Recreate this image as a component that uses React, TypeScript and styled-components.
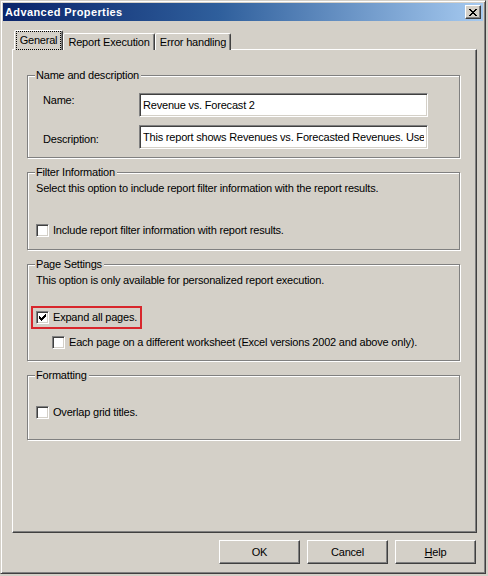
import React from 'react';
import styled, { createGlobalStyle, css } from 'styled-components';

const face = '#d4d0c8';
const shadow = '#808080';
const darkShadow = '#404040';
const highlight = '#ffffff';

const GlobalStyle = createGlobalStyle`
  * { box-sizing: border-box; }
  html, body {
    margin: 0;
    padding: 0;
    background: ${face};
  }
  body {
    font-family: "Liberation Sans", Arial, sans-serif;
    font-size: 11px;
    letter-spacing: -0.2px;
    color: #000;
  }
`;

const raised = css`
  border: 1px solid;
  border-color: ${highlight} ${darkShadow} ${darkShadow} ${highlight};
  box-shadow: inset -1px -1px 0 ${shadow};
`;

const sunken = css`
  border: 1px solid;
  border-color: ${shadow} ${highlight} ${highlight} ${shadow};
  box-shadow: inset 1px 1px 0 ${darkShadow}, inset -1px -1px 0 ${face};
`;

const Window = styled.div`
  width: 486px;
  height: 574px;
  display: flex;
  flex-direction: column;
  padding: 2px;
  background: ${face};
  border: 1px solid;
  border-color: ${face} ${darkShadow} ${darkShadow} ${face};
  box-shadow: inset 1px 1px 0 ${highlight}, inset -1px -1px 0 ${shadow};
`;

const TitleBar = styled.div`
  height: 18px;
  display: flex;
  align-items: center;
  justify-content: space-between;
  padding: 0 2px 0 2px;
  background: linear-gradient(to right, #0a246a 0%, #2f5f9c 45%, #a6caf0 100%);
`;

const Title = styled.span`
  color: #fff;
  font-weight: bold;
  font-size: 11px;
  letter-spacing: 0.4px;
`;

const CloseButton = styled.div`
  width: 16px;
  height: 14px;
  background: ${face};
  display: flex;
  align-items: center;
  justify-content: center;
  ${raised};
`;

const Body = styled.div`
  display: flex;
  flex-direction: column;
  padding: 10px 0 0 9px;
`;

const TabStrip = styled.div`
  display: flex;
  align-items: flex-end;
  height: 19px;
  margin-left: 2px;
  position: relative;
  z-index: 1;
  margin-bottom: -1px;
`;

const Tab = styled.div<{ $active?: boolean; $width: number }>`
  width: ${({ $width }) => $width}px;
  height: ${({ $active }) => ($active ? 20 : 17)}px;
  background: ${face};
  border: 1px solid;
  border-bottom: none;
  border-color: ${highlight} ${darkShadow} transparent ${highlight};
  border-radius: 2px 2px 0 0;
  box-shadow: inset -1px 0 0 ${shadow};
  display: flex;
  align-items: ${({ $active }) => ($active ? 'flex-start' : 'center')};
  justify-content: center;
  padding-top: ${({ $active }) => ($active ? 1 : 0)}px;
  white-space: nowrap;
`;

const FocusLabel = styled.span`
  outline: 1px dotted #000;
  padding: 2px 3px 2px 3px;
  line-height: 13px;
`;

const Panel = styled.div`
  width: 465px;
  height: 484px;
  display: flex;
  flex-direction: column;
  gap: 14px;
  padding: 25px 0 0 14px;
  ${raised};
`;

const GroupBox = styled.div<{ $height: number }>`
  position: relative;
  width: 433px;
  height: ${({ $height }) => $height}px;
  border: 1px solid ${shadow};
  box-shadow: inset 1px 1px 0 ${highlight}, 1px 1px 0 ${highlight};
  padding: 9px 0 0 8px;
`;

const GroupLegend = styled.span`
  position: absolute;
  top: -7px;
  left: 7px;
  padding: 0 2px 0 1px;
  line-height: 13px;
  background: ${face};
`;

const FieldGrid = styled.div`
  display: grid;
  grid-template-columns: 96px 289px;
  grid-auto-rows: 24px;
  row-gap: 8px;
  padding: 8px 0 0 7px;
`;

const FieldLabel = styled.label<{ $offset: number }>`
  padding-top: ${({ $offset }) => $offset}px;
  line-height: 13px;
`;

const TextBox = styled.input`
  width: 289px;
  height: 24px;
  padding: 0 3px 1px;
  margin: 0;
  background: #fff;
  font: inherit;
  letter-spacing: inherit;
  color: #000;
  outline: none;
  ${sunken};
`;

const Hint = styled.div`
  line-height: 13px;
`;

const CheckRow = styled.label<{ $marked?: boolean; $indent?: number; $gap: number }>`
  display: inline-flex;
  align-self: flex-start;
  align-items: center;
  gap: 4px;
  height: 13px;
  line-height: 13px;
  margin-top: ${({ $gap }) => $gap}px;
  margin-left: ${({ $indent }) => $indent ?? 0}px;
  ${({ $marked }) =>
    $marked &&
    css`
      outline: 2px solid #d8262c;
      outline-offset: 3px;
    `}
`;

const CheckBox = styled.span`
  width: 13px;
  height: 13px;
  flex: none;
  display: flex;
  align-items: center;
  justify-content: center;
  background: #fff;
  ${sunken};
`;

const GroupBody = styled.div`
  display: flex;
  flex-direction: column;
`;

const ButtonRow = styled.div`
  width: 465px;
  display: flex;
  justify-content: flex-end;
  gap: 7px;
  padding-right: 1px;
  margin-top: 7px;
`;

const DialogButton = styled.button`
  width: 81px;
  height: 24px;
  padding: 0;
  background: ${face};
  font: inherit;
  letter-spacing: inherit;
  color: #000;
  ${raised};
`;

const CheckMark = () => (
  <svg width="7" height="7" viewBox="0 0 7 7" shapeRendering="crispEdges">
    <path
      d="M0 2h1v3H0z M1 3h1v3H1z M2 4h1v3H2z M3 3h1v3H3z M4 2h1v3H4z M5 1h1v3H5z M6 0h1v3H6z"
      fill="#000"
    />
  </svg>
);

const CloseGlyph = () => (
  <svg width="8" height="7" viewBox="0 0 8 7" shapeRendering="crispEdges">
    <path
      d="M0 0h2v1H0z M6 0h2v1H6z M1 1h2v1H1z M5 1h2v1H5z M2 2h4v1H2z M3 3h2v1H3z M2 4h4v1H2z M1 5h2v1H1z M5 5h2v1H5z M0 6h2v1H0z M6 6h2v1H6z"
      fill="#000"
    />
  </svg>
);

const Check = ({
  label,
  checked,
  marked,
  indent,
  gap,
}: {
  label: string;
  checked?: boolean;
  marked?: boolean;
  indent?: number;
  gap: number;
}) => (
  <CheckRow $marked={marked} $indent={indent} $gap={gap}>
    <CheckBox>{checked && <CheckMark />}</CheckBox>
    <span>{label}</span>
  </CheckRow>
);

export default function App() {
  return (
    <>
      <GlobalStyle />
      <Window>
        <TitleBar>
          <Title>Advanced Properties</Title>
          <CloseButton>
            <CloseGlyph />
          </CloseButton>
        </TitleBar>
        <Body>
          <TabStrip>
            <Tab $active $width={49}>
              <FocusLabel>General</FocusLabel>
            </Tab>
            <Tab $width={92}>Report Execution</Tab>
            <Tab $width={76}>Error handling</Tab>
          </TabStrip>
          <Panel>
            <GroupBox $height={83}>
              <GroupLegend>Name and description</GroupLegend>
              <FieldGrid>
                <FieldLabel $offset={1}>Name:</FieldLabel>
                <TextBox readOnly defaultValue="Revenue vs. Forecast 2" />
                <FieldLabel $offset={8}>Description:</FieldLabel>
                <TextBox
                  readOnly
                  defaultValue="This report shows Revenues vs. Forecasted Revenues. Use it to compare actuals with plan."
                />
              </FieldGrid>
            </GroupBox>
            <GroupBox $height={78}>
              <GroupLegend>Filter Information</GroupLegend>
              <GroupBody>
                <Hint>Select this option to include report filter information with the report results.</Hint>
                <Check gap={29} label="Include report filter information with report results." />
              </GroupBody>
            </GroupBox>
            <GroupBox $height={97}>
              <GroupLegend>Page Settings</GroupLegend>
              <GroupBody>
                <Hint>This option is only available for personalized report execution.</Hint>
                <Check gap={24} checked marked label="Expand all pages." />
                <Check
                  gap={12}
                  indent={16}
                  label="Each page on a different worksheet (Excel versions 2002 and above only)."
                />
              </GroupBody>
            </GroupBox>
            <GroupBox $height={65}>
              <GroupLegend>Formatting</GroupLegend>
              <GroupBody>
                <Check gap={21} label="Overlap grid titles." />
              </GroupBody>
            </GroupBox>
          </Panel>
          <ButtonRow>
            <DialogButton>OK</DialogButton>
            <DialogButton>Cancel</DialogButton>
            <DialogButton>
              <u>H</u>elp
            </DialogButton>
          </ButtonRow>
        </Body>
      </Window>
    </>
  );
}
